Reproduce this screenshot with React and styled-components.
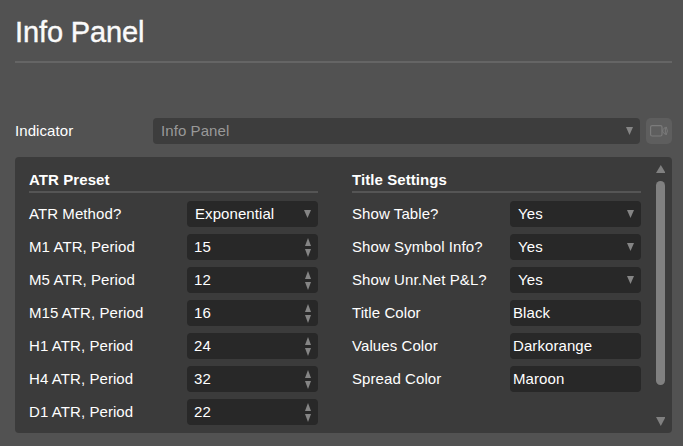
import React from "react";
import styled, { createGlobalStyle } from "styled-components";

const GlobalStyle = createGlobalStyle`
  * { box-sizing: border-box; }
  html, body { margin: 0; background: #525252; overflow: hidden; }
  body {
    font: 15px/26px "Liberation Sans", Arial, sans-serif;
    letter-spacing: 0.08px;
    color: #fff;
  }
`;

const Page = styled.main`
  width: 683px;
  height: 446px;
  padding: 0 11px 0 15px;
  display: flex;
  flex-direction: column;
  background: #525252;
`;

const Title = styled.h1`
  margin: 0;
  height: 63px;
  padding-top: 14px;
  border-bottom: 2px solid #656565;
  font-size: 29px;
  font-weight: 400;
  line-height: 36px;
  letter-spacing: -0.12px;
  color: #fafafa;
  -webkit-text-stroke: 0.4px #fafafa;
`;

const IndicatorRow = styled.div`
  display: grid;
  grid-template-columns: 138px 486.5px 26px;
  justify-content: start;
  margin-top: 55px;
  height: 26px;
`;

const Label = styled.label`
  white-space: nowrap;
`;

const Field = styled.div`
  display: flex;
  align-items: center;
  justify-content: space-between;
  height: 26px;
  padding: 0 7px 0 ${(p) => p.$inset}px;
  border-radius: 4px;
  background: ${(p) => (p.$muted ? "#3d3d3d" : "#282828")};
  color: ${(p) => (p.$muted ? "#999" : "#fff")};
`;

const RecordButton = styled.button`
  display: flex;
  align-items: center;
  justify-content: center;
  width: 26px;
  height: 26px;
  margin-left: 6.5px;
  padding: 0;
  border: 0;
  border-radius: 5px;
  background: #5e5e5e;
`;

const Panel = styled.section`
  display: flex;
  justify-content: space-between;
  width: 657px;
  height: 276px;
  margin-top: 13px;
  padding: 0 5px 0 14px;
  border-radius: 4px;
  background: #3b3b3b;
  overflow: hidden;
`;

const Columns = styled.div`
  display: grid;
  grid-template-columns: 289px 289px;
  column-gap: 34px;
`;

const Group = styled.div`
  display: flex;
  flex-direction: column;
  padding-top: 10px;
`;

const Heading = styled.h2`
  flex: none;
  height: 26px;
  margin: 0 0 8px;
  border-bottom: 2px solid #555;
  font-size: 15px;
  font-weight: 700;
  line-height: 26px;
`;

const Row = styled.div`
  display: grid;
  flex: none;
  grid-template-columns: 158px 131px;
  height: 26px;
  margin-bottom: 7px;
`;

const Spinner = styled.span`
  display: flex;
  flex-direction: column;
  gap: 3px;
`;

const Scrollbar = styled.div`
  display: flex;
  flex-direction: column;
  align-items: center;
  width: 15px;
  margin-right: -1px;
  padding-top: 8px;
`;

const Thumb = styled.div`
  width: 9px;
  height: 204px;
  margin: 8px 0 32px;
  border-radius: 5px;
  background: #808080;
`;

const Glyph = styled.svg`
  display: block;
  flex: none;
`;

function Arrow({ up, width = 7, height = 8, color = "#858585" }) {
  return (
    <Glyph width={width} height={height} viewBox="0 0 8 8" preserveAspectRatio="none">
      <path d={up ? "M0 8H8L4 0Z" : "M0 0H8L4 8Z"} fill={color} />
    </Glyph>
  );
}

function Setting({ label, value, type }) {
  const inset = { select: 8, number: 7, text: 3 }[type];
  return (
    <Row>
      <Label>{label}</Label>
      <Field $inset={inset}>
        <span>{value}</span>
        {type === "select" && <Arrow />}
        {type === "number" && (
          <Spinner>
            <Arrow up width={6} height={8} />
            <Arrow width={6} height={8} />
          </Spinner>
        )}
      </Field>
    </Row>
  );
}

const atrSettings = [
  ["ATR Method?", "Exponential", "select"],
  ["M1 ATR, Period", "15", "number"],
  ["M5 ATR, Period", "12", "number"],
  ["M15 ATR, Period", "16", "number"],
  ["H1 ATR, Period", "24", "number"],
  ["H4 ATR, Period", "32", "number"],
  ["D1 ATR, Period", "22", "number"],
];

const titleSettings = [
  ["Show Table?", "Yes", "select"],
  ["Show Symbol Info?", "Yes", "select"],
  ["Show Unr.Net P&L?", "Yes", "select"],
  ["Title Color", "Black", "text"],
  ["Values Color", "Darkorange", "text"],
  ["Spread Color", "Maroon", "text"],
];

function SettingsGroup({ title, items }) {
  return (
    <Group>
      <Heading>{title}</Heading>
      {items.map(([label, value, type]) => (
        <Setting key={label} label={label} value={value} type={type} />
      ))}
    </Group>
  );
}

export default function App() {
  return (
    <>
      <GlobalStyle />
      <Page>
        <Title>Info Panel</Title>
        <IndicatorRow>
          <Label>Indicator</Label>
          <Field $inset={8} $muted>
            <span>Info Panel</span>
            <Arrow />
          </Field>
          <RecordButton aria-label="Record">
            <Glyph width="18" height="12" viewBox="0 0 18 12" fill="none" stroke="#7b7b7b">
              <rect x="0.6" y="0.6" width="11.4" height="10.4" rx="1.5" strokeWidth="1.2" />
              <path d="M15.3 2.2L12.8 4.8V7L15.3 9.6Z M16.2 1.8Q18.6 5.9 16.2 10" />
            </Glyph>
          </RecordButton>
        </IndicatorRow>
        <Panel>
          <Columns>
            <SettingsGroup title="ATR Preset" items={atrSettings} />
            <SettingsGroup title="Title Settings" items={titleSettings} />
          </Columns>
          <Scrollbar>
            <Arrow up width={9.6} height={8} color="#808080" />
            <Thumb />
            <Arrow width={9.6} height={9} color="#808080" />
          </Scrollbar>
        </Panel>
      </Page>
    </>
  );
}
